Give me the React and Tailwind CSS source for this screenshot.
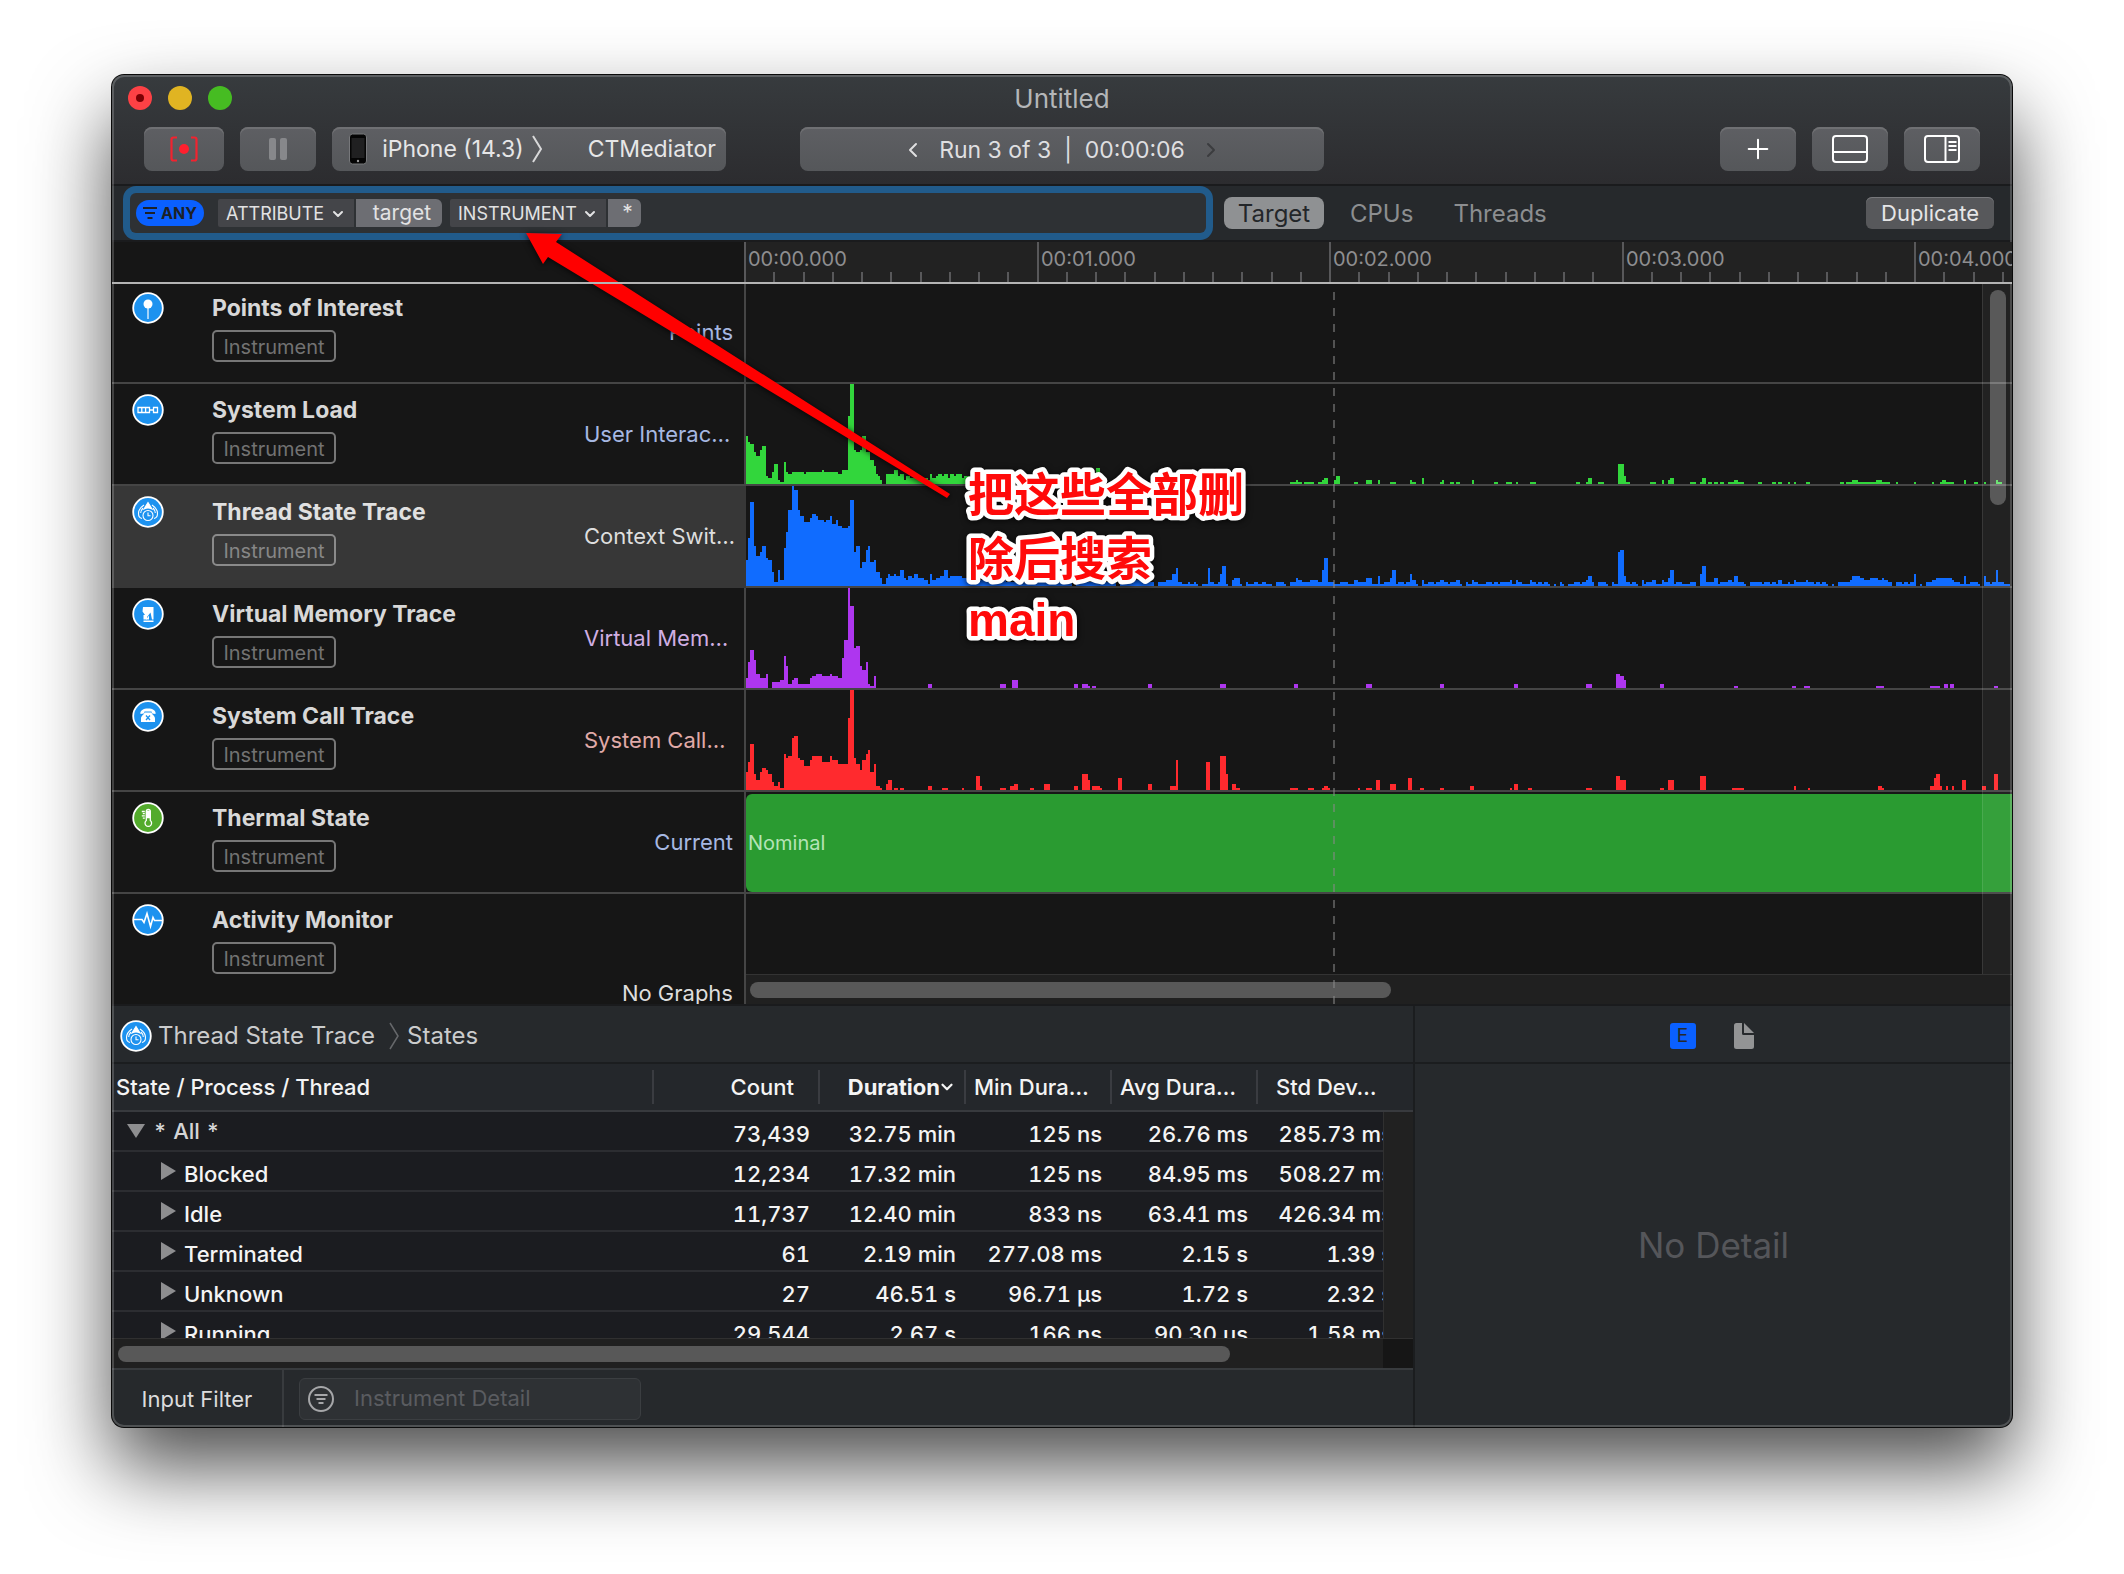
import React from "react";
import { ChevronDown, ChevronLeft, ChevronRight, Plus } from "lucide-react";

// Sample histograms. Each pair is [bucket, height]; a height holds until the next pair.
const LOAD = [
  [0, 24], [1, 21], [2, 20], [4, 16], [5, 14], [7, 17], [8, 19], [10, 4], [11, 3], [13, 6], [14, 10], [16, 2], [17, 1], [19, 11],
  [20, 6], [21, 5], [23, 6], [29, 5], [30, 6], [38, 7], [39, 6], [46, 5], [48, 7], [51, 34], [52, 50], [54, 17], [55, 16], [57, 17],
  [58, 24], [60, 16], [62, 12], [64, 9], [65, 5], [66, 4], [67, 2], [68, 0], [70, 5], [74, 7], [76, 4], [77, 5], [79, 2], [80, 4],
  [82, 3], [84, 4], [87, 3], [91, 2], [92, 5], [93, 3], [95, 4], [96, 5], [98, 4], [99, 5], [101, 3], [102, 5], [104, 4], [105, 5],
  [108, 3], [109, 4], [116, 3], [125, 0], [134, 2], [137, 0], [175, 8], [177, 0], [272, 1], [275, 2], [276, 1], [278, 0], [279, 1],
  [284, 0], [286, 1], [288, 2], [289, 3], [291, 0], [294, 2], [295, 4], [297, 0], [304, 1], [306, 0], [310, 2], [313, 0], [316, 2],
  [317, 0], [322, 1], [325, 0], [332, 2], [333, 1], [335, 0], [338, 3], [339, 0], [347, 1], [348, 2], [349, 0], [352, 1], [354, 0],
  [355, 1], [357, 0], [363, 2], [364, 0], [374, 1], [376, 0], [380, 1], [383, 0], [385, 1], [386, 0], [392, 1], [395, 0], [415, 1],
  [417, 0], [420, 1], [421, 3], [423, 0], [426, 1], [429, 0], [436, 10], [439, 4], [440, 1], [442, 0], [452, 1], [455, 0], [458, 2],
  [459, 0], [461, 2], [462, 3], [464, 0], [472, 1], [475, 0], [477, 1], [478, 3], [480, 0], [481, 1], [483, 0], [484, 1], [486, 0],
  [487, 1], [489, 0], [491, 1], [494, 2], [496, 1], [499, 0], [506, 1], [508, 0], [513, 1], [515, 0], [516, 1], [518, 0], [521, 1],
  [522, 0], [524, 1], [525, 0], [530, 1], [532, 0], [547, 1], [549, 0], [550, 1], [553, 2], [556, 1], [565, 2], [568, 1], [572, 0],
  [575, 1], [576, 0], [584, 1], [585, 0], [593, 1], [594, 0], [597, 1], [598, 2], [600, 1], [604, 0], [609, 2], [610, 0], [614, 1],
  [616, 0], [619, 1], [620, 0], [625, 2], [626, 1], [628, 0],
];

const THREADS = [
  [0, 13], [1, 24], [2, 42], [4, 20], [5, 15], [7, 17], [8, 20], [10, 14], [11, 13], [13, 7], [14, 2], [16, 8], [17, 3], [19, 19],
  [20, 27], [21, 38], [23, 50], [24, 48], [26, 38], [27, 35], [29, 32], [32, 34], [33, 36], [35, 35], [36, 33], [39, 32], [40, 33],
  [42, 35], [43, 31], [45, 33], [46, 30], [48, 29], [51, 30], [52, 43], [54, 17], [55, 20], [57, 9], [58, 12], [60, 18], [61, 20],
  [62, 12], [64, 13], [65, 7], [67, 4], [68, 1], [70, 4], [71, 6], [72, 5], [74, 6], [75, 5], [77, 8], [79, 4], [80, 3], [81, 5],
  [83, 4], [84, 6], [86, 4], [89, 3], [91, 1], [92, 6], [93, 3], [95, 4], [97, 5], [99, 8], [101, 4], [102, 5], [108, 4], [112, 3],
  [130, 2], [163, 0], [165, 2], [185, 0], [187, 3], [198, 2], [204, 0], [206, 2], [210, 3], [213, 6], [215, 9], [216, 2], [218, 1],
  [221, 2], [222, 1], [224, 2], [225, 1], [226, 0], [228, 1], [231, 9], [232, 2], [234, 1], [236, 2], [237, 6], [238, 10], [240, 1],
  [241, 0], [243, 3], [244, 4], [247, 1], [248, 0], [250, 2], [251, 1], [254, 2], [256, 1], [258, 2], [260, 1], [263, 0], [265, 2],
  [269, 1], [270, 0], [272, 2], [275, 4], [276, 3], [278, 2], [282, 3], [286, 2], [288, 8], [289, 14], [291, 2], [294, 1], [297, 2],
  [301, 1], [304, 3], [306, 2], [310, 4], [313, 1], [316, 5], [317, 1], [319, 2], [322, 4], [323, 8], [325, 1], [326, 2], [329, 1],
  [330, 2], [332, 6], [333, 3], [335, 1], [336, 0], [338, 3], [339, 1], [341, 2], [344, 1], [345, 2], [347, 3], [349, 2], [351, 1],
  [352, 2], [355, 3], [357, 1], [358, 0], [360, 2], [361, 1], [363, 3], [364, 2], [366, 1], [370, 2], [373, 1], [374, 2], [376, 1],
  [377, 2], [382, 3], [383, 1], [385, 3], [386, 2], [388, 1], [392, 3], [393, 2], [395, 1], [396, 2], [398, 1], [399, 2], [401, 1],
  [402, 0], [404, 1], [405, 0], [407, 2], [408, 1], [409, 0], [411, 1], [414, 2], [417, 1], [418, 2], [420, 3], [421, 5], [423, 2],
  [424, 0], [426, 2], [430, 1], [431, 0], [433, 2], [434, 1], [436, 17], [437, 18], [439, 5], [440, 2], [442, 1], [443, 2], [445, 1],
  [446, 0], [448, 3], [449, 1], [450, 2], [453, 3], [455, 1], [458, 3], [459, 2], [461, 4], [462, 8], [464, 1], [465, 2], [468, 1],
  [472, 2], [475, 0], [477, 6], [478, 10], [480, 2], [484, 4], [486, 1], [487, 2], [491, 3], [493, 2], [494, 5], [496, 2], [499, 1],
  [500, 0], [502, 2], [508, 1], [509, 2], [512, 1], [513, 2], [515, 1], [516, 3], [518, 1], [521, 2], [522, 1], [524, 3], [525, 2],
  [530, 3], [531, 2], [534, 1], [535, 2], [537, 1], [538, 2], [540, 1], [541, 0], [543, 1], [544, 0], [546, 2], [552, 3], [553, 5],
  [557, 4], [559, 3], [562, 4], [566, 3], [568, 4], [569, 3], [571, 2], [573, 0], [575, 2], [578, 1], [579, 2], [581, 1], [582, 2],
  [584, 6], [585, 0], [587, 1], [588, 0], [590, 2], [593, 3], [595, 4], [603, 3], [604, 2], [607, 1], [609, 5], [610, 1], [612, 2],
  [616, 1], [617, 0], [619, 5], [620, 2], [622, 1], [623, 2], [625, 8], [626, 2], [629, 1], [632, 0],
];

const MEMORY = [
  [0, 5], [1, 13], [2, 19], [4, 14], [5, 7], [7, 5], [10, 7], [11, 0], [13, 3], [17, 4], [19, 16], [20, 11], [21, 2], [23, 4], [24, 5],
  [26, 2], [32, 5], [33, 6], [35, 7], [38, 6], [42, 7], [43, 6], [46, 5], [48, 15], [49, 24], [51, 50], [52, 41], [54, 20], [55, 21],
  [57, 11], [58, 9], [60, 13], [61, 2], [62, 1], [64, 6], [65, 0], [91, 2], [93, 0], [127, 2], [130, 0], [133, 4], [136, 0], [164, 2],
  [166, 0], [168, 2], [171, 1], [172, 0], [173, 1], [175, 0], [201, 2], [203, 0], [237, 2], [240, 0], [274, 2], [276, 0], [310, 2],
  [313, 0], [347, 2], [349, 0], [384, 2], [386, 0], [420, 2], [423, 0], [435, 7], [437, 6], [439, 4], [440, 0], [457, 2], [459, 0],
  [494, 1], [496, 0], [523, 1], [525, 0], [529, 1], [532, 0], [565, 1], [569, 0], [592, 1], [597, 0], [599, 2], [601, 0], [602, 2],
  [604, 0], [624, 1], [626, 0],
];

const CALLS = [
  [0, 9], [1, 14], [2, 23], [4, 8], [5, 5], [7, 9], [8, 11], [10, 10], [11, 8], [13, 4], [14, 2], [16, 4], [17, 1], [19, 18], [20, 16],
  [21, 17], [23, 26], [24, 27], [26, 16], [27, 15], [29, 12], [32, 15], [33, 17], [38, 14], [42, 17], [43, 15], [46, 13], [51, 36],
  [52, 50], [54, 16], [55, 13], [57, 10], [58, 15], [60, 18], [61, 20], [62, 9], [64, 13], [65, 2], [67, 1], [68, 0], [70, 3], [71, 5],
  [73, 0], [74, 1], [76, 0], [77, 1], [79, 0], [91, 2], [93, 0], [98, 1], [101, 0], [108, 1], [109, 0], [115, 7], [117, 2], [118, 0],
  [127, 1], [130, 0], [132, 2], [134, 3], [136, 0], [142, 1], [144, 0], [149, 3], [152, 0], [164, 2], [166, 0], [168, 8], [171, 5],
  [172, 0], [173, 2], [177, 1], [178, 0], [186, 6], [188, 0], [201, 3], [203, 0], [212, 2], [215, 15], [216, 0], [230, 14], [232, 0],
  [237, 17], [240, 8], [241, 0], [243, 3], [245, 1], [247, 0], [272, 1], [276, 0], [281, 1], [284, 0], [288, 1], [289, 2], [291, 1],
  [292, 0], [306, 1], [307, 0], [310, 1], [313, 0], [315, 5], [317, 0], [322, 3], [325, 0], [331, 6], [333, 0], [337, 1], [339, 0],
  [347, 1], [349, 0], [362, 2], [364, 0], [382, 1], [383, 0], [384, 3], [386, 0], [391, 1], [393, 0], [420, 1], [423, 0], [435, 7],
  [437, 5], [440, 0], [457, 1], [459, 0], [461, 5], [464, 0], [477, 7], [480, 0], [493, 1], [499, 0], [524, 2], [525, 0], [531, 1],
  [532, 0], [566, 2], [568, 1], [569, 0], [592, 2], [594, 6], [595, 8], [597, 2], [598, 0], [600, 2], [601, 0], [603, 2], [604, 0],
  [608, 5], [610, 0], [618, 2], [620, 0], [624, 8], [626, 0],
];

const toPath = (steps) =>
  `M0 50${steps.map(([x, h]) => `H${x}V${50 - h}`).join("")}H632V50Z`;

const Histogram = ({ steps, className }) => (
  <svg viewBox="0 0 632 50" shapeRendering="crispEdges" className={`h-[100px] w-[1264px] max-w-none ${className}`}>
    <path d={toPath(steps)} fill="currentColor" />
  </svg>
);

const glyphs = {
  pin: (
    <g fill="#fff">
      <circle cx="16" cy="12" r="4.5" />
      <path d="M15.4 15h1.2v12h-1.2z" />
    </g>
  ),
  load: (
    <g fill="none" stroke="#fff" strokeWidth="1.3">
      <path d="M6 13.5h11.5v5H6zM9.8 13.5v5M13.6 13.5v5M17.5 16h4M21.5 13.5h4v5h-4z" />
    </g>
  ),
  thread: (
    <g fill="none" stroke="#fff" strokeWidth="1.1">
      <path d="M16 6.5l-4 6.5c2.500-1.200 5.500-1.200 8 0z" fill="#fff" />
      <path d="M12 9c-3 2-5.500 5-5.500 8.500 0 2.500 1.500 4.500 3.500 5M20 9c3 2 5.500 5 5.500 8.500 0 2.500-1.500 4.500-3.500 5M11 12c-1.500 1.500-2.300 3-2.300 5M21 12c1.500 1.500 2.300 3 2.300 5" />
      <circle cx="16" cy="19.500" r="5" />
      <path d="M16 16.500v3.200h2.500" />
    </g>
  ),
  memory: (
    <g fill="#fff">
      <path d="M11 9h10.500v12.500H20l-1.500-7-3.500 4.500v2.500h-3.500V17h1.500l-2.500-3.500z" />
      <path d="M11.500 22.500h10V24h-10z" />
      <path d="M14 21.500l3-4v4z" />
    </g>
  ),
  phone: (
    <g fill="#fff">
      <path d="M8.500 14c-.8-3.500 3-5.500 7.500-5.500s8.300 2 7.500 5.500l-3.300-.5-.7-2h-7l-.7 2z" />
      <path d="M12.500 12.500h7c.5 2.500 3.500 3 3.500 6V22H9v-3.500c0-3 3-3.500 3.500-6z" />
      <path d="M14 15.500l4 4.500M18 15.500l-4 4.500" stroke="#1d92ef" strokeWidth="1.300" />
    </g>
  ),
  thermo: (
    <g fill="none" stroke="#fff" strokeWidth="1.300">
      <path d="M14.300 18.500V9.500a2 2 0 0 1 4 0v9a3.300 3.300 0 1 1-4 0z" />
      <path d="M14.800 9.500h3v6h-3z" fill="#fff" />
      <path d="M9.800 9.500h3M10.800 11.700h2M9.800 13.900h3M10.800 16.100h2" />
    </g>
  ),
  pulse: (
    <path d="M2 15.500h8l2 3 3-9 3.500 13 2.500-9 1.500 3h7.500" fill="none" stroke="#fff" strokeWidth="1.600" />
  ),
};

const InstrumentIcon = ({ glyph, color = "#1d92ef" }) => (
  <svg viewBox="0 0 32 32" className="size-8 shrink-0">
    <circle cx="16" cy="16" r="14.800" fill={color} stroke="#fff" strokeWidth="1.800" />
    {glyphs[glyph]}
  </svg>
);

const tracks = [
  { name: "Points of Interest", glyph: "pin", graph: "Points", color: "text-[#a6b8e2]" },
  { name: "System Load", glyph: "load", graph: "User Interac…", color: "text-[#a6b8e2]", long: true, steps: LOAD, fill: "text-[#32d63c]" },
  { name: "Thread State Trace", glyph: "thread", graph: "Context Swit…", color: "text-[#dedede]", long: true, steps: THREADS, fill: "text-[#106cff]", selected: true },
  { name: "Virtual Memory Trace", glyph: "memory", graph: "Virtual Mem…", color: "text-[#d0aee2]", long: true, steps: MEMORY, fill: "text-[#ae36ef]" },
  { name: "System Call Trace", glyph: "phone", graph: "System Call…", color: "text-[#e0aaa8]", long: true, steps: CALLS, fill: "text-[#ff2a2e]" },
  { name: "Thermal State", glyph: "thermo", iconColor: "#53ab2c", graph: "Current", color: "text-[#a6b8e2]", state: "Nominal" },
];

const rows = [
  ["Blocked", "12,234", "17.32 min", "125 ns", "84.95 ms", "508.27 ms"],
  ["Idle", "11,737", "12.40 min", "833 ns", "63.41 ms", "426.34 ms"],
  ["Terminated", "61", "2.19 min", "277.08 ms", "2.15 s", "1.39 s"],
  ["Unknown", "27", "46.51 s", "96.71 µs", "1.72 s", "2.32 s"],
  ["Running", "29,544", "2.67 s", "166 ns", "90.30 µs", "1.58 ms"],
];

const toolButton =
  "flex h-11 items-center justify-center rounded-lg bg-linear-to-b from-[#5e5f63] to-[#55575a] shadow-[inset_0_2px_0_#6f7073]";

const TitleBar = () => (
  <header className="border-b-2 border-[#1a1b1d] bg-linear-to-b from-[#373b3e] to-[#2c2c2f] pb-[7px]">
    <div className="grid h-[46px] grid-cols-[1fr_auto_1fr] items-center px-4">
      <div className="flex gap-4">
        <button aria-label="Close" className="flex size-6 items-center justify-center rounded-full bg-[#fd4145]">
          <span className="size-2 rounded-full bg-[#7c0004]" />
        </button>
        <button aria-label="Minimize" className="size-6 rounded-full bg-[#e0b422]" />
        <button aria-label="Zoom" className="size-6 rounded-full bg-[#46bc22]" />
      </div>
      <h1 className="pt-0.5 text-[26px] leading-8 text-[#b4b6b8]">Untitled</h1>
    </div>
    <div className="grid h-14 grid-cols-[1fr_524px_1fr] items-center px-8">
      <div className="flex gap-4">
        <button aria-label="Record" className={`w-20 ${toolButton}`}>
          <svg viewBox="0 0 30 28" className="h-7 w-[30px]">
            <path d="M8 2.500H4.500q-2 0-2 2v19q0 2 2 2H8M22 2.500h3.500q2 0 2 2v19q0 2-2 2H22" fill="none" stroke="#f2232f" strokeWidth="2.200" />
            <circle cx="15" cy="14" r="5" fill="#ff1f2e" />
          </svg>
        </button>
        <button aria-label="Pause" className={`w-[76px] gap-1 ${toolButton}`}>
          <span className="h-[22px] w-[7px] rounded-xs bg-[#87888b]" />
          <span className="h-[22px] w-[7px] rounded-xs bg-[#87888b]" />
        </button>
        <button className={`w-[394px] pl-1.5 text-[23px] text-[#e6e6e7] ${toolButton}`}>
          <svg viewBox="0 0 20 32" className="mr-3.5 h-8 w-5">
            <rect x="1.500" y="1" width="17" height="30" rx="3" fill="#050505" stroke="#77787b" strokeWidth="1" />
            <rect x="3.500" y="5" width="13" height="20" fill="#202021" />
            <circle cx="10" cy="28" r="1.200" fill="#999" />
          </svg>
          iPhone (14.3)
          <svg viewBox="0 0 12 28" className="ml-2 h-7 w-3">
            <path d="M1 1l8 13-8 13" fill="none" stroke="#d8d8d9" strokeWidth="2" />
          </svg>
          <span className="ml-11">CTMediator</span>
        </button>
      </div>
      <div className={`gap-3.5 pt-0.5 text-[23px] text-[#dfdfe0] ${toolButton}`}>
        <button aria-label="Previous run"><ChevronLeft size={24} /></button>
        <span className="whitespace-pre">Run 3 of 3  |  00:00:06</span>
        <button aria-label="Next run"><ChevronRight size={24} className="text-[#3b3c3f]" /></button>
      </div>
      <div className="flex justify-end gap-4 text-white">
        <button aria-label="Add instrument" className={`w-[76px] ${toolButton}`}>
          <Plus size={32} strokeWidth={1.5} />
        </button>
        <button aria-label="Toggle detail area" className={`w-[76px] ${toolButton}`}>
          <svg viewBox="0 0 36 28" className="h-7 w-9" fill="none" stroke="#fff" strokeWidth="2">
            <rect x="1" y="1" width="34" height="26" rx="3" />
            <path d="M1 17h34" />
          </svg>
        </button>
        <button aria-label="Toggle inspector" className={`w-[76px] ${toolButton}`}>
          <svg viewBox="0 0 36 28" className="h-7 w-9" fill="none" stroke="#fff" strokeWidth="2">
            <rect x="1" y="1" width="34" height="26" rx="3" />
            <path d="M21.500 1v26M24.500 7h8M24.500 11h8M24.500 15h8" />
          </svg>
        </button>
      </div>
    </div>
  </header>
);

const TokenSelect = ({ label, className }) => (
  <span className={`flex h-7 items-center rounded-l-xs bg-[#444549] pt-0.5 ${className}`}>
    <select aria-label={label} className="w-full appearance-none pl-2 text-[18px] leading-[26px]">
      <option>{label}</option>
    </select>
    <ChevronDown size={16} strokeWidth={3} className="mr-2 -ml-6 shrink-0" />
  </span>
);

const FilterBar = () => (
  <div className="flex h-14 items-center border-b-2 border-[#1a1b1d] bg-[#26292c] px-[18px]">
    <div className="flex h-10 w-[1076px] items-center rounded-md bg-[#2e3134] pl-1.5 text-[#e2e2e3] ring-7 ring-[#215b8b]">
      <button className="flex h-[26px] w-[68px] items-center justify-center gap-1 rounded-full bg-[#0a60ff] text-base font-bold text-[#1d2126]">
        <svg viewBox="0 0 14 12" className="h-3 w-3.5" stroke="currentColor" strokeWidth="2">
          <path d="M0 1h14M2 6h10M4.500 11h5" />
        </svg>
        ANY
      </button>
      <TokenSelect label="ATTRIBUTE" className="ml-3.5 w-[136px]" />
      <button className="ml-0.5 h-7 w-[86px] rounded-r-md bg-[#6d6e73] pl-1.5 text-[21px] leading-7">target</button>
      <TokenSelect label="INSTRUMENT" className="ml-2 w-[156px]" />
      <button className="ml-0.5 h-7 w-[33px] rounded-r-md bg-[#6d6e73] pl-1.5 text-[21px] leading-7">*</button>
      <input aria-label="Filter" className="ml-2 min-w-0 flex-1 outline-none" />
    </div>
    <nav className="ml-[18px] flex flex-1 items-center text-2xl text-[#8c8e90]">
      <button className="flex h-8 w-[100px] items-center justify-center rounded-lg bg-[#8f9193] pt-0.5 text-[#232629]">Target</button>
      <button className="ml-[26px] pt-0.5">CPUs</button>
      <button className="ml-10 pt-0.5">Threads</button>
    </nav>
    <button className="h-8 w-32 rounded-md bg-[#57585b] text-[22px] leading-8 text-[#e6e6e7] shadow-[inset_0_1px_0_#77787b]">
      Duplicate
    </button>
  </div>
);

const Ruler = () => (
  <div className="relative z-10 flex h-[42px] border-b-2 border-[#b4b4b4]">
    <div className="w-[632px] shrink-0" />
    <div className="min-w-0 flex-1 overflow-hidden bg-[#222]">
      <svg viewBox="0 0 1268 40" className="h-10 w-[1268px] max-w-none" fill="#58585a">
        {Array.from({ length: 44 }, (_, i) => (
          <rect key={i} x={Math.round(i * 29.25)} y={i % 10 ? 30 : 0} width="2" height="40" />
        ))}
        {[0, 1, 2, 3, 4].map((s) => (
          <text key={s} x={4 + Math.round(s * 292.5)} y="24" fontSize="20" fill="#8e8e90">
            {`00:0${s}.000`}
          </text>
        ))}
      </svg>
    </div>
  </div>
);

const TrackLabel = ({ name, glyph, iconColor, selected }) => (
  <div className={`flex flex-1 items-start gap-12 pt-[10px] pl-5 ${selected ? "text-[#e0e0e0]" : "text-[#d8d8d8]"}`}>
    <InstrumentIcon glyph={glyph} color={iconColor} />
    <div>
      <h2 className="text-[23px] leading-8 font-bold">{name}</h2>
      <span className={`mt-1.5 flex h-8 w-[124px] items-center justify-center rounded-[5px] border-2 pt-0.5 text-[20px] leading-6 ${
        selected ? "border-[#8a8a8a] text-[#868686]" : "border-[#777] text-[#727272]"
      }`}>
        Instrument
      </span>
    </div>
  </div>
);

const Track = ({ track }) => (
  <div className="flex h-[102px]">
    <div className={`flex w-[634px] shrink-0 border-r-2 border-b-2 pr-[11px] ${
      track.selected ? "border-[#373737] bg-[#373737]" : "border-[#454545]"
    }`}>
      <TrackLabel {...track} />
      <span className={`w-[149px] self-center whitespace-nowrap text-[22px] ${track.long ? "text-left" : "text-right"} ${track.color}`}>
        {track.graph}
      </span>
    </div>
    <div className="min-w-0 flex-1 overflow-hidden border-b-2 border-[#454545]">
      {track.steps && <Histogram steps={track.steps} className={track.fill} />}
      {track.state && (
        <div className="mt-0.5 flex h-[98px] items-center rounded-l-md bg-[#2a9b31] pl-0.5 text-[20px] text-[#b5e3b7]">
          {track.state}
        </div>
      )}
    </div>
  </div>
);

const Timeline = () => (
  <section className="relative h-[762px] overflow-hidden bg-[#161616]">
    <Ruler />
    <div className="-mt-0.5">
      {tracks.map((track) => (
        <Track key={track.name} track={track} />
      ))}
      <div className="flex h-[110px]">
        <div className="flex w-[634px] shrink-0 border-r-2 border-[#454545] pr-[11px]">
          <TrackLabel name="Activity Monitor" glyph="pulse" />
          <span className="self-end text-[22px] leading-[22px] text-[#dedede]">No Graphs</span>
        </div>
        <div className="flex min-w-0 flex-1 items-end">
          <div className="h-[30px] flex-1 border-t border-[#333] bg-[#202020] pt-[7px] pl-1">
            <div className="h-4 w-[641px] rounded-full bg-[#585858]" />
          </div>
        </div>
      </div>
    </div>
    <div className="absolute top-[50px] bottom-0 left-[1221px] w-0.5 bg-[repeating-linear-gradient(to_bottom,#8888_0_8px,transparent_8px_16px)]" />
    <div className="absolute top-[42px] right-0 bottom-[30px] w-[30px] border-l border-white/10 bg-white/5 pt-1.5 pl-[7px]">
      <div className="h-[215px] w-4 rounded-full bg-white/25" />
    </div>
  </section>
);

const nameCell = "h-10 border-b-2 border-[#2c2d31] p-0";
const valueCell = "h-10 border-b-2 border-[#2c2d31] pt-1.5 pb-0 pl-0 text-right";
const headCell = "h-12 border-b-2 border-[#383a3e] p-0 text-left font-medium";
const headInner = "flex h-[34px] items-center border-r-2 border-[#3a3c41]";

const Values = ({ values }) =>
  values.map((value, i) => (
    <td key={i} className={`${valueCell} ${i === 4 ? "pr-5" : "pr-[10px]"}`}>{value}</td>
  ));

const StatesTable = () => (
  <div className="relative h-[274px] overflow-hidden bg-[#1b1c20]">
    <table className="w-full table-fixed border-separate border-spacing-0 text-[22px] leading-[30px] font-medium whitespace-nowrap text-[#f4f4f4] tabular-nums">
      <colgroup>
        <col className="w-[542px]" />
        <col className="w-[166px]" />
        <col className="w-[146px]" />
        <col className="w-[146px]" />
        <col className="w-[146px]" />
        <col />
      </colgroup>
      <thead className="bg-[#24272b]">
        <tr>
          <th className={headCell}><div className={`pl-1 ${headInner}`}>State / Process / Thread</div></th>
          <th className={headCell}><div className={`justify-end pr-6 ${headInner}`}>Count</div></th>
          <th className={headCell} aria-sort="descending">
            <div className={`justify-end pr-2 font-bold ${headInner}`}>
              Duration
              <ChevronDown size={18} strokeWidth={3} className="-ml-0.5" />
            </div>
          </th>
          <th className={headCell}><div className={`pl-2 ${headInner}`}>Min Dura…</div></th>
          <th className={headCell}><div className={`pl-2 ${headInner}`}>Avg Dura…</div></th>
          <th className={headCell}><div className="flex h-[34px] items-center pl-[18px]">Std Dev…</div></th>
        </tr>
      </thead>
      <tbody>
        <tr>
          <td className={`${nameCell} pl-[15px] text-[#d5d5d6]`}>
            <button className="flex items-center gap-2">
              <svg viewBox="0 0 18 14" className="h-3.5 w-[18px]"><path d="M0 0h18l-9 14z" fill="#8e8e90" /></svg>
              * All *
            </button>
          </td>
          <Values values={["73,439", "32.75 min", "125 ns", "26.76 ms", "285.73 ms"]} />
        </tr>
        {rows.map(([state, ...values]) => (
          <tr key={state}>
            <td className={`${nameCell} pl-[49px]`}>
              <button className="flex items-center gap-2">
                <svg viewBox="0 0 15 18" className="h-[18px] w-[15px]"><path d="M0 0v18l15-9z" fill="#8e8e90" /></svg>
                <span className="pt-1.5">{state}</span>
              </button>
            </td>
            <Values values={values} />
          </tr>
        ))}
      </tbody>
    </table>
    <div className="absolute top-12 right-0 bottom-0 w-[30px] border-l border-[#303030] bg-[#212121]" />
  </div>
);

const DetailPane = () => (
  <section className="min-w-0 flex-1">
    <div className="flex h-[58px] items-center border-b-2 border-[#1b1d1f] pt-1 pl-2 text-2xl text-[#cbcccd]">
      <InstrumentIcon glyph="thread" />
      <span className="ml-1.5">Thread State Trace</span>
      <svg viewBox="0 0 12 28" className="mr-1.5 ml-3.5 h-7 w-3">
        <path d="M1 1l8 13-8 13" fill="none" stroke="#66686b" strokeWidth="1.500" />
      </svg>
      States
    </div>
    <StatesTable />
    <div className="flex h-8 border-t border-b-2 border-t-[#303030] border-b-[#383b3e] bg-[#202020]">
      <div className="flex-1 pt-[7px] pl-1.5">
        <div className="h-4 w-[1112px] rounded-full bg-[#585858]" />
      </div>
      <div className="w-[30px] bg-[#161616]" />
    </div>
    <div className="flex h-[57px] items-center">
      <button className="h-full w-[172px] border-r-2 border-[#383b3e] pt-0.5 text-[22px] text-[#dcdcdd]">Input Filter</button>
      <label className="ml-[15px] flex h-[42px] w-[342px] items-center rounded-md border border-[#3b3e41] bg-[#2e3134] pl-2">
        <svg viewBox="0 0 26 26" className="size-[26px] shrink-0" fill="none" stroke="#a6a7a9" strokeWidth="2">
          <circle cx="13" cy="13" r="12" />
          <path d="M6.500 9h13M8.500 13h9M10.500 17h5" />
        </svg>
        <input
          aria-label="Instrument Detail"
          placeholder="Instrument Detail"
          className="ml-5 min-w-0 flex-1 text-[22px] outline-none placeholder:text-[#5a5c60]"
        />
      </label>
    </div>
  </section>
);

const Inspector = () => (
  <aside className="flex w-[599px] flex-col border-l-2 border-[#1b1d1f]">
    <div className="flex h-[58px] items-center justify-center gap-[38px] border-b-2 border-[#1b1d1f] pt-1 pr-1">
      <button aria-label="Extended detail" className="size-[26px] rounded-[3px] bg-[#0a60ff] text-[19px] leading-[26px] text-[#26292c]">
        E
      </button>
      <button aria-label="Run info">
        <svg viewBox="0 0 20 26" className="h-[26px] w-5" fill="#939495">
          <path d="M2.500 0H8v10.500q0 1.500 1.500 1.500H20v11.500q0 2.500-2.500 2.500h-15Q0 26 0 23.500v-21Q0 0 2.500 0z" />
          <path d="M10 0l10 10H10z" />
        </svg>
      </button>
    </div>
    <p className="flex flex-1 items-center justify-center text-[35px] text-[#55565a]">No Detail</p>
  </aside>
);

// Hand-drawn callout over the window: an arrow to the filter field and its note
const Annotation = () => (
  <svg viewBox="0 0 740 440" className="pointer-events-none absolute top-[150px] left-[408px] h-[440px] w-[740px] drop-shadow-[0_1px_3px_#000c]">
    <path d="M6 8L42 9L36 17L430 269L427 273L28 32L23 39Z" fill="#f00" />
    <g
      className="font-['Liberation_Sans','Noto_Sans_CJK_SC',sans-serif] text-[46px] font-bold [paint-order:stroke_fill]"
      fill="#ff0a0a"
      stroke="#fff"
      strokeWidth="9"
      strokeLinejoin="round"
    >
      <text x="448" y="286">把这些全部删</text>
      <text x="448" y="350">除后搜索</text>
      <text x="448" y="411">main</text>
    </g>
  </svg>
);

export default function App() {
  return (
    <div className="min-h-screen bg-white px-28 pt-[75px] pb-[147px] font-[Inter,sans-serif]">
      <main className="relative rounded-xl bg-[#26292c] shadow-[0_0_0_1px_#0a0a0a,0_40px_80px_rgba(0,0,0,0.7)]">
        <div className="overflow-hidden rounded-xl">
          <TitleBar />
          <FilterBar />
          <Timeline />
          <div className="flex border-t-2 border-[#1a1b1d]">
            <DetailPane />
            <Inspector />
          </div>
        </div>
        <div className="pointer-events-none absolute inset-0 rounded-xl shadow-[inset_0_0_0_2px_#ffffff30]" />
        <Annotation />
      </main>
    </div>
  );
}
